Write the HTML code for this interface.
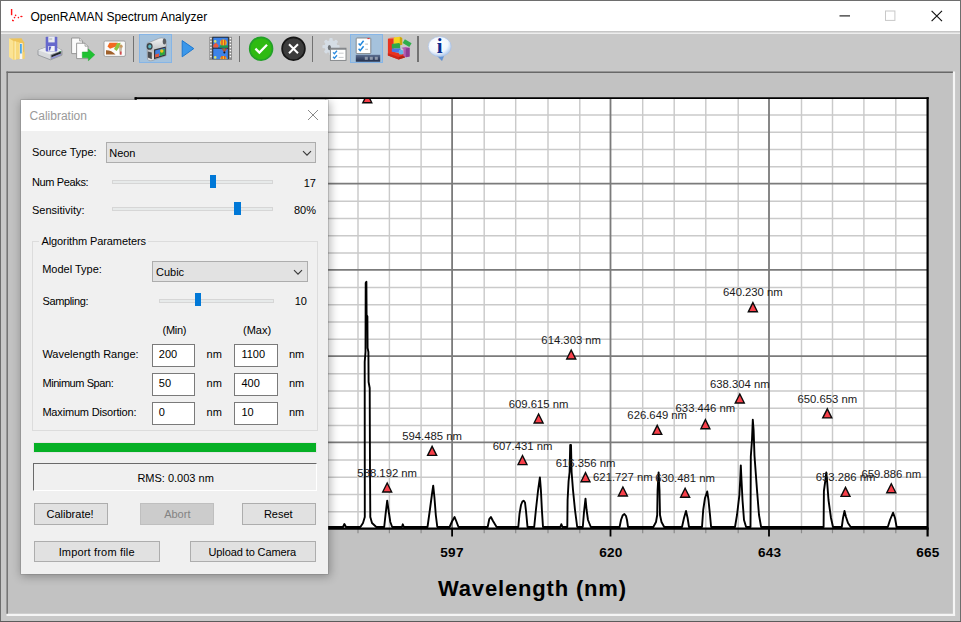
<!DOCTYPE html>
<html lang="en"><head><meta charset="utf-8"><title>OpenRAMAN Spectrum Analyzer</title>
<style>
html,body{margin:0;padding:0}
body{width:961px;height:622px;overflow:hidden;position:relative;background:#c8c8c8;font-family:"Liberation Sans",sans-serif;font-size:11px;color:#000}
.ab{position:absolute}
#win{left:0;top:0;width:959px;height:620px;border:1px solid #6e6e6e;border-bottom-color:#4a4a4a}
#title{left:1px;top:1px;width:959px;height:29.8px;background:#fff}
#title .cap{left:29.4px;top:8.7px;font-size:12px;line-height:15px;white-space:nowrap;color:#000}
#tbline{left:1px;top:30.8px;width:959px;height:3.5px;background:linear-gradient(#c6c6c6 0,#c6c6c6 48%,#ededed 52%,#ededed 100%)}
.sep{top:35.6px;width:1.3px;height:26.2px;background:#727272}
.hot{background:#a5c2dc;border:1px solid #86b5e6;box-sizing:border-box}
#panel{left:6.6px;top:71.2px;width:948.5px;height:544.8px;box-sizing:border-box;background:#c0c0c0;border-top:1.6px solid #6c6c6c;border-left:1.5px solid #6c6c6c;border-right:2.1px solid #f6f6f6;border-bottom:2.1px solid #f6f6f6}
#dlg{left:21px;top:100px;width:307px;height:474.4px;background:#f0f0f0;box-shadow:0 0 0 .6px rgba(110,110,110,.45),1px 1.5px 9px 1px rgba(0,0,0,.3)}
#dlg .tb{left:0;top:0;width:307px;height:31px;background:#fff}
#dlg .tb span{left:8.6px;top:8.9px;font-size:12px;line-height:15px;color:#9a9a9a}
.lbl{white-space:nowrap;line-height:13px;height:13px}
.combo{box-sizing:border-box;background:#e2e2e2;border:1px solid #adadad;line-height:19px;padding:1.3px 0 0 2.2px;white-space:nowrap}
.edit{box-sizing:border-box;background:#fff;border:1px solid #7a7a7a;line-height:17.8px;padding-left:5.8px;white-space:nowrap}
.btn{box-sizing:border-box;background:#e1e1e1;border:1px solid #adadad;text-align:center;line-height:13px;padding-top:4px;white-space:nowrap}
.btn.dis{background:#cccccc;border-color:#bfbfbf;color:#838383}
.track{box-sizing:border-box;height:4px;background:#e7eaea;border:1px solid #d6d6d6}
.thumb{width:6.4px;height:13.4px;background:#0078d7}
.grp{box-sizing:border-box;border:1px solid #dcdcdc}
</style></head><body>
<div id="win" class="ab"></div>
<div id="title" class="ab">
<svg class="ab" style="left:8px;top:6px" width="18" height="18" viewBox="9 7 18 18"><g fill="#ff1418"><rect x="10.9" y="9" width="1.4" height="6.2"/><circle cx="15.6" cy="15.4" r=".8"/><circle cx="14.5" cy="17.6" r=".8"/><path d="M12 19.4L14.2 20.2L13.4 21.4L12 21Z"/><circle cx="18.4" cy="17.6" r=".8"/><ellipse cx="21.4" cy="16.5" rx="1.2" ry=".7"/></g></svg>
<span class="ab cap">OpenRAMAN Spectrum Analyzer</span>
<svg class="ab" style="left:830px;top:5px" width="120" height="22" viewBox="831 6 120 22"><path d="M839.5 15.9H850" stroke="#111" stroke-width="1.1" fill="none"/><rect x="885.5" y="11" width="9.4" height="9.4" fill="none" stroke="#c8c8c8" stroke-width="1"/><path d="M931.6 10.8L942 21.2M942 10.8L931.6 21.2" stroke="#111" stroke-width="1.15" fill="none"/></svg>
</div>
<div id="tbline" class="ab"></div>

<!-- folder -->
<svg class="ab" style="left:8px;top:37px" width="18" height="24" viewBox="8 37 18 24">
<path d="M9.3 38.4L21.5 38.2L24.3 42.5V58.8L13.2 59.6Z" fill="#eec45a"/>
<path d="M19.4 43.2H22.6V59H19.4Z" fill="#f4f6f8"/><path d="M20 44H21.8V53.5H20Z" fill="#49a6e6"/>
<path d="M22.6 52H24.7V58.6L22.6 59Z" fill="#f5d370"/>
<path d="M9 38.3L13.4 41V60L9 57Z" fill="#fbe393"/>
<path d="M13.4 41L19.4 42.3V58.6L13.4 60Z" fill="#f7d97c"/>
<path d="M14.6 41.3L16 41.6V59.4L14.6 59.7Z" fill="#fbe9a8"/>
</svg>
<!-- save -->
<svg class="ab" style="left:36px;top:35px" width="28" height="26" viewBox="36 35 28 26">
<path d="M38 50.2L47 47H56L62 50.4V55.2L50.5 59.8L38 55Z" fill="#d7d9dc" stroke="#8d9094" stroke-width=".8"/>
<path d="M38 50.2L50.5 54.6L62 50.4L56 47H47Z" fill="#eceef0"/>
<path d="M50.5 54.6V59.8L62 55.2V50.4Z" fill="#9c9fa6"/>
<path d="M51.5 55.3L60.8 51.6V53.4L51.5 57.2Z" fill="#22252c"/>
<path d="M51.5 57.6L60.8 54V55L51.5 58.8Z" fill="#8f8fe0"/>
<rect x="45.7" y="36.8" width="11.6" height="14.6" rx=".8" fill="#6668cc"/>
<rect x="48.3" y="36.6" width="6.4" height="5.8" fill="#e9ebef"/>
<rect x="49.2" y="38.6" width="3" height=".8" fill="#9aa0aa"/>
<path d="M48.3 46H54.7V51.4H48.3Z" fill="#f3f4f8"/><path d="M49 46.6H51.4L50 50.6H49Z" fill="#5a5fc4"/>
<circle cx="60" cy="51.6" r=".7" fill="#2db34a"/>
</svg>
<!-- copy -->
<svg class="ab" style="left:70px;top:36px" width="27" height="26" viewBox="70 36 27 26">
<path d="M71.6 38H79.6L82.6 41V53.6H71.6Z" fill="#fafafa" stroke="#8f8f8f" stroke-width=".9"/>
<path d="M79.6 38V41H82.6" fill="#e4e4e4" stroke="#8f8f8f" stroke-width=".7"/>
<path d="M76.6 43.2H85L88 46.2V58.6H76.6Z" fill="#fdfdfd" stroke="#8f8f8f" stroke-width=".9"/>
<path d="M85 43.2V46.2H88" fill="#e4e4e4" stroke="#8f8f8f" stroke-width=".7"/>
<path d="M82.3 52H88.4V49L94.8 54.8L88.4 60.7V57.7H82.3Z" fill="#1fc232" stroke="#18a82a" stroke-width=".5"/>
</svg>
<!-- picture -->
<svg class="ab" style="left:102px;top:39px" width="26" height="20" viewBox="102 39 26 20">
<rect x="104" y="41" width="21.4" height="15.4" rx="1.4" fill="#fbfbfb" stroke="#9a9a9a" stroke-width=".9"/>
<path d="M109.5 42.8H118L116 46.5L110 48.8L107.5 46.5Z" fill="#f26a1f"/>
<path d="M117 43.2L120.6 42.8L119.8 46.5L116.6 51L114 49Z" fill="#8dc63f"/>
<path d="M106 50.2C109 50 113 51.5 115.5 54.6H106Z" fill="#a0612b"/>
<path d="M119 45.6L122.4 46.4L121 54.6H119.4Z" fill="#c8b8a2"/>
<rect x="120.3" y="51.5" width="1.2" height="3.2" fill="#d0202a"/>
<circle cx="121" cy="46.2" r="1.6" fill="#c79a62"/>
</svg>
<div class="ab sep" style="left:133px"></div>
<!-- camera (selected) -->
<div class="ab hot" style="left:139px;top:34px;width:33px;height:29px"></div>
<svg class="ab" style="left:144px;top:36px" width="25" height="27" viewBox="144 36 25 27">
<defs><linearGradient id="cg" x1="0" y1="0" x2="0" y2="1"><stop offset="0" stop-color="#f4f4f4"/><stop offset=".55" stop-color="#bfc1c4"/><stop offset="1" stop-color="#e6e6e6"/></linearGradient></defs>
<path d="M147 43.4L158.5 38.6C162 37 166.2 38.6 166.2 42V55.6L152 60.6C149 61.3 147.4 60 147.4 58Z" fill="url(#cg)" stroke="#8a8c90" stroke-width=".6"/>
<ellipse cx="164.4" cy="41.4" rx="1.7" ry="3" fill="#5b5d61"/>
<ellipse cx="149.6" cy="46.4" rx="3" ry="3.4" fill="#3c4348"/><ellipse cx="149.8" cy="46.4" rx="1.6" ry="1.9" fill="#5bb7c2"/>
<path d="M147.8 51.4L151.8 52.4V59.2L147.8 57.6Z" fill="#4b4d50"/>
<path d="M154 49.6L165.8 46.4V55.6L154 59.2Z" fill="#33363b"/>
<path d="M155.2 50.6L164.8 48V54.6L155.2 57.6Z" fill="#3f7fe0"/>
<path d="M160 50.2L164.8 49V54.6L160 56Z" fill="#2fa63a"/><circle cx="161.8" cy="51" r="1.7" fill="#f2c31c"/>
<path d="M155.2 54.6L159 53.6V56.4L155.2 57.6Z" fill="#e2563c"/>
</svg>
<!-- play -->
<svg class="ab" style="left:180px;top:39px" width="16" height="20" viewBox="180 39 16 20">
<path d="M182.2 40.6L193.8 48.6L182.2 56.8Z" fill="#3b97ea" stroke="#1d78cf" stroke-width="1" stroke-linejoin="round"/>
</svg>
<!-- film -->
<svg class="ab" style="left:208px;top:36px" width="25" height="25" viewBox="208 36 25 25">
<rect x="209.3" y="36.8" width="22.7" height="23" fill="#8c8c8c"/>
<rect x="212.4" y="36.8" width="16.3" height="23" fill="#15171a"/>
<rect x="213.2" y="37.6" width="14.7" height="10" fill="#3d83e8"/>
<rect x="213.2" y="48.6" width="14.7" height="10.6" fill="#3d83e8"/>
<g fill="#fff"><circle cx="210.9" cy="38.6" r=".8"/><circle cx="210.9" cy="41.6" r=".8"/><circle cx="210.9" cy="44.6" r=".8"/><circle cx="210.9" cy="47.6" r=".8"/><circle cx="210.9" cy="50.6" r=".8"/><circle cx="210.9" cy="53.6" r=".8"/><circle cx="210.9" cy="56.6" r=".8"/>
<circle cx="230.4" cy="38.6" r=".8"/><circle cx="230.4" cy="41.6" r=".8"/><circle cx="230.4" cy="44.6" r=".8"/><circle cx="230.4" cy="47.6" r=".8"/><circle cx="230.4" cy="50.6" r=".8"/><circle cx="230.4" cy="53.6" r=".8"/><circle cx="230.4" cy="56.6" r=".8"/></g>
<circle cx="223.4" cy="42.8" r="3.3" fill="#f3c619"/><path d="M222 39.8V45.8M224.8 39.8V45.8" stroke="#d8342a" stroke-width="1.1"/>
<path d="M219.6 45.4H227.9V47.6H219.6Z" fill="#1f9e48"/>
<path d="M213.6 44.4L216 42.8L218.6 45.4L218 47.6H213.2Z" fill="#ec5a3a"/>
<circle cx="215.2" cy="41.4" r="1.3" fill="#d8e36a"/>
<path d="M221.4 48.6H227.4L224.4 52.4Z" fill="#c9442f"/><path d="M223 48.6H225L224.4 51Z" fill="#3cae4a"/><circle cx="224.4" cy="52.6" r="1" fill="#15171a"/>
<path d="M220.2 59.2A3.2 3.2 0 0 1 226.6 59.2Z" fill="#f3c619"/><path d="M222 56V59.2M224.8 56V59.2" stroke="#d8342a" stroke-width="1.1"/>
<circle cx="215.2" cy="57.4" r="1.3" fill="#d8e36a"/>
<rect x="209.3" y="59.2" width="22.7" height=".8" fill="#8c8c8c"/>
</svg>
<div class="ab sep" style="left:239px"></div>
<!-- ok -->
<svg class="ab" style="left:248px;top:35px" width="27" height="28" viewBox="248 35 27 28">
<circle cx="261.1" cy="48.7" r="11.4" fill="#2fba12" stroke="#23a028" stroke-width="1.7"/>
<path d="M255.4 48.6L259.4 52.6L267 44.8" fill="none" stroke="#fff" stroke-width="2.3"/>
</svg>
<!-- cancel -->
<svg class="ab" style="left:280px;top:35px" width="27" height="28" viewBox="280 35 27 28">
<circle cx="293.5" cy="48.7" r="11.4" fill="#3c3c3c" stroke="#161616" stroke-width="1.7"/>
<path d="M289 44.2L298 53.2M298 44.2L289 53.2" fill="none" stroke="#fff" stroke-width="2"/>
</svg>
<div class="ab sep" style="left:312px"></div>
<!-- gear + checklist -->
<svg class="ab" style="left:321px;top:36px" width="27" height="26" viewBox="321 36 27 26">
<g fill="#d5dde5"><circle cx="331" cy="46.6" r="6.4"/>
<g transform="translate(331 46.6)"><rect x="-1.7" y="-8.6" width="3.4" height="17.2" rx="1"/><rect x="-1.7" y="-8.6" width="3.4" height="17.2" rx="1" transform="rotate(45)"/><rect x="-1.7" y="-8.6" width="3.4" height="17.2" rx="1" transform="rotate(90)"/><rect x="-1.7" y="-8.6" width="3.4" height="17.2" rx="1" transform="rotate(135)"/></g></g>
<ellipse cx="329.4" cy="47.6" rx="1.6" ry="2.6" fill="#6d7278"/>
<rect x="330.4" y="48.2" width="15.6" height="12.2" fill="#fff" stroke="#7d8084" stroke-width=".9"/>
<rect x="330.4" y="48.2" width="15.6" height="1.5" fill="#7d8084"/>
<path d="M333 52.4L334.4 53.8L337 50.8M333 56.8L334.4 58.2L337 55.2" fill="none" stroke="#2b8be0" stroke-width="1.3"/>
<path d="M338.6 53.2H343.6M338.6 57.4H343.6" stroke="#c9cbce" stroke-width="1"/>
</svg>
<!-- checklist selected -->
<div class="ab hot" style="left:350px;top:34px;width:33px;height:29px"></div>
<svg class="ab" style="left:354px;top:36px" width="28" height="27" viewBox="354 36 28 27">
<defs><linearGradient id="bg2" x1="0" y1="0" x2="0" y2="1"><stop offset="0" stop-color="#5c6f92"/><stop offset="1" stop-color="#1f2b48"/></linearGradient></defs>
<rect x="356.2" y="38" width="14.6" height="15.6" rx=".8" fill="#fff" stroke="#7e8185" stroke-width=".9"/>
<rect x="367.4" y="38" width="2.2" height="1.1" fill="#e0383e"/>
<path d="M358.6 43.4L360.2 45.2L363.6 40.8M358.6 48.8L360.2 50.6L363.6 46.2" fill="none" stroke="#1f86dc" stroke-width="1.5"/>
<path d="M365.2 44.2H368M365.2 49.4H368" stroke="#c4c6c9" stroke-width="1.2"/>
<rect x="355.8" y="54.8" width="24.4" height="6.9" fill="url(#bg2)"/>
<g fill="#8f99ab"><rect x="364.8" y="56.8" width="3" height="3"/><rect x="369.8" y="56.8" width="3" height="3"/><rect x="374.8" y="56.8" width="3" height="3"/></g>
</svg>
<!-- blocks -->
<svg class="ab" style="left:386px;top:35px" width="27" height="27" viewBox="386 35 27 27">
<path d="M387.9 38.8L393.7 38.2V51.8L404.9 54.6V57.6L398.6 59.6L387.9 55.6Z" fill="#e9331f"/>
<path d="M387.9 38.8L390.2 37.7L395.4 37.5L393.7 38.6Z" fill="#f4664e"/>
<path d="M387.9 53.2L398.6 57V59.6L387.9 55.6Z" fill="#c9281a"/>
<path d="M398.6 57L404.9 54.9V57.6L398.6 59.6Z" fill="#b32014"/>
<path d="M393.8 37.6L399.8 36.7L402.2 37.9V44.8L396.4 45.6L393.8 44.4Z" fill="#f5d41c"/><path d="M399.8 36.7L402.2 37.9V44.8L399.8 45.2Z" fill="#c9a50f"/>
<path d="M391.8 44L399 43L400.2 44V48.4H391.8Z" fill="#2ea84c"/>
<path d="M391.8 48.4H400.6V53L391.8 51.8Z" fill="#4a78e8"/>
<rect x="398.8" y="50" width="4.2" height="4.6" rx="1.1" fill="#62b4e6"/>
<path d="M401.4 47.8L405.8 47L409.6 47.8V56.4L405.8 57.2L403.4 56V49.2Z" fill="#b25cb2"/><path d="M405.8 48.4L409.6 47.8V56.4L405.8 57.2Z" fill="#8b3c93"/>
<rect x="-3.9" y="-2.2" width="7.8" height="4.4" fill="#2fae4a" transform="translate(407.1 43.2) rotate(31)"/>
</svg>
<div class="ab sep" style="left:417.4px"></div>
<!-- info -->
<svg class="ab" style="left:426px;top:35px" width="28" height="28" viewBox="426 35 28 28">
<defs><radialGradient id="ig" cx=".42" cy=".36" r=".7"><stop offset="0" stop-color="#ffffff"/><stop offset=".62" stop-color="#f1f6fc"/><stop offset="1" stop-color="#9fbde6"/></radialGradient></defs>
<path d="M436.8 55.2L441.9 60.6L444 55Z" fill="#5f93d6" stroke="#4a7fc8" stroke-width=".5"/>
<ellipse cx="439.7" cy="46.6" rx="11.5" ry="10" fill="url(#ig)" stroke="#a9c2e6" stroke-width=".7"/>
<text x="439.6" y="53.4" font-family="'Liberation Serif',serif" font-weight="bold" font-size="21" fill="#0b2b90" text-anchor="middle">i</text>
</svg>

<svg id="chart" width="961" height="622" viewBox="0 0 961 622" style="position:absolute;left:0;top:0">
<defs><clipPath id="pc2"><rect x="300" y="98.9" width="200" height="20"/></clipPath><clipPath id="pc"><rect x="135.8" y="98.2" width="791.8" height="430.4"/></clipPath></defs>
<rect x="6.5" y="71.5" width="948.6" height="544.5" fill="#c2c2c2"/>
<path d="M6.5 72.3H953" stroke="#686868" stroke-width="1.55" fill="none"/>
<path d="M7.2 71.5V613.9" stroke="#6c6c6c" stroke-width="1.4" fill="none"/>
<path d="M954 71.6V616" stroke="#f5f5f5" stroke-width="2.2" fill="none"/>
<path d="M6.5 614.9H955.1" stroke="#f5f5f5" stroke-width="2.2" fill="none"/>
<rect x="135.8" y="98.2" width="791.8" height="430.4" fill="#fff"/>
<path d="M166.5 98.2V528.6M198.2 98.2V528.6M229.9 98.2V528.6M261.6 98.2V528.6M325.6 98.2V528.6M358 98.2V528.6M389.4 98.2V528.6M421.1 98.2V528.6M484.2 98.2V528.6M515.7 98.2V528.6M548 98.2V528.6M579.8 98.2V528.6M642.7 98.2V528.6M674.2 98.2V528.6M705.8 98.2V528.6M738.2 98.2V528.6M801.5 98.2V528.6M832.5 98.2V528.6M863.9 98.2V528.6M895.8 98.2V528.6M135.8 115H927.6M135.8 132.2H927.6M135.8 149.5H927.6M135.8 166.7H927.6M135.8 201.2H927.6M135.8 218.5H927.6M135.8 235.7H927.6M135.8 253H927.6M135.8 287.4H927.6M135.8 304.7H927.6M135.8 321.9H927.6M135.8 339.2H927.6M135.8 373.7H927.6M135.8 390.9H927.6M135.8 408.2H927.6M135.8 425.4H927.6M135.8 459.9H927.6M135.8 477.2H927.6M135.8 494.4H927.6M135.8 511.7H927.6" stroke="#cacaca" stroke-width="1.45" fill="none"/>
<path d="M293.6 98.2V528.6M452.1 98.2V528.6M610.5 98.2V528.6M769 98.2V528.6M135.8 183.7H927.6M135.8 269.9H927.6M135.8 356.1H927.6M135.8 442.4H927.6" stroke="#7b7b7b" stroke-width="1.8" fill="none"/>
<path d="M166.5 528.6V533.2M198.2 528.6V533.2M229.9 528.6V533.2M261.6 528.6V533.2M325.6 528.6V533.2M358 528.6V533.2M389.4 528.6V533.2M421.1 528.6V533.2M484.2 528.6V533.2M515.7 528.6V533.2M548 528.6V533.2M579.8 528.6V533.2M642.7 528.6V533.2M674.2 528.6V533.2M705.8 528.6V533.2M738.2 528.6V533.2M801.5 528.6V533.2M832.5 528.6V533.2M863.9 528.6V533.2M895.8 528.6V533.2" stroke="#8a8a8a" stroke-width="1.2" fill="none"/>
<path d="M293.6 528.6V536.4M452.1 528.6V536.4M610.5 528.6V536.4M769 528.6V536.4" stroke="#000" stroke-width="1.8" fill="none"/>
<polyline points="135,527 343,527 344.4,524 346,527 360.4,527 363,523 364.8,517 364.7,362 365.5,352 365.7,283 366.4,281.8 366.6,315 367.4,316.5 367.6,348 368.4,352 368.6,382 369.7,388 370,470 370.3,517 372,523 376.3,527 384.2,527 385.6,514 387.2,500.7 388.8,512 390.3,522 392.2,527 402,527 402.8,524.3 403.8,527 427.5,527 430,509 432,494 433.2,485.7 434.4,497 435.8,515 437.3,527 449.6,527 452,521.5 454.6,517 456.2,521 458.5,527 487.7,527 489.3,519 490.9,517 493,521 496.6,527 518.3,527 519.5,514 521,505 522.4,501.5 523.6,500.7 525,502.5 526,511 527.5,527 534.2,527 536,509 538,491 539.9,477.4 540.9,490 541.9,510 543,527 560.3,527 561.3,524.2 562.5,527 567.3,527 567.6,499.8 568.6,481 569.6,472 570.2,445 571,445 571.6,472 573,490 575,510 577.2,527 582.8,527 584,512 585.5,498.6 586.6,510 588,520 590.8,527 619.6,527 621,520 622.8,515.2 624.4,514 626,516 627,520 628,527 653.3,527 656,522 657.2,515 657.6,490 658.6,472.4 659.5,490 660,515 661.5,522 664.2,527 682,527 684,518 686,511 687.6,518 689,527 702,527 703.2,510 705,498 707.2,491.5 708.5,500 710,515 711.1,527 735,527 737,515 739.4,495 740.2,480 740.8,465.4 741.5,480 742.5,500 744,520 746.1,527 750.5,527 750.8,456.5 752,440 752.8,419.7 753.6,430 754.5,456 757,490 759,515 761.1,527 823.6,527 823.9,491 825.4,480 826.3,472.4 827,480 828.5,500 831,518 833,527 841.8,527 843,518 844.5,511 846,517 848,523 850.7,527 887.8,527 890,520 893.1,512.7 895,518 896.6,527 927,527" fill="none" stroke="#000" stroke-width="1.9" stroke-linejoin="round" clip-path="url(#pc)"/>
<path d="M134.7 98.1H928.7" stroke="#000" stroke-width="1.8" fill="none"/>
<path d="M134.7 528.65H928.7" stroke="#000" stroke-width="2.3" fill="none"/>
<path d="M135.7 97.2V529.8M927.6 97.2V536.4" stroke="#000" stroke-width="2.2" fill="none"/>
<path d="M387.2 481.4L392.8 492.7H381.6ZM432.1 444.8L437.8 456.1H426.5ZM522.5 454L528.1 465.3H516.9ZM538.6 412.4L544.2 423.7H533ZM571.2 348.4L576.9 359.7H565.6ZM585.5 471.1L591.1 482.4H579.9ZM622.9 485.4L628.5 496.7H617.2ZM657.2 423.8L662.9 435.1H651.6ZM685.1 486.7L690.8 498H679.5ZM705.4 418.1L711 429.4H699.8ZM739.8 392.4L745.4 403.7H734.1ZM752.9 301.1L758.5 312.4H747.2ZM827.3 407.3L832.9 418.6H821.6ZM845.5 485.8L851.1 497.1H839.9ZM891.3 482.2L896.9 493.5H885.6Z" fill="#0a0a0a"/>
<path d="M387.2 484.5L390.6 491.3H383.8ZM432.1 447.9L435.5 454.7H428.7ZM522.5 457.1L525.9 463.9H519.1ZM538.6 415.5L542 422.3H535.2ZM571.2 351.5L574.6 358.3H567.8ZM585.5 474.2L588.9 481H582.1ZM622.9 488.5L626.3 495.3H619.5ZM657.2 426.9L660.6 433.7H653.8ZM685.1 489.8L688.5 496.6H681.7ZM705.4 421.2L708.8 428H702ZM739.8 395.5L743.2 402.3H736.4ZM752.9 304.2L756.3 311H749.5ZM827.3 410.4L830.7 417.2H823.9ZM845.5 488.9L848.9 495.7H842.1ZM891.3 485.3L894.7 492.1H887.9Z" fill="#f8404a"/>
<g clip-path="url(#pc2)"><path d="M367.3 92.2L372.9 103.5H361.7Z" fill="#0a0a0a"/><path d="M367.3 95.3L370.7 102.1H363.9Z" fill="#f8404a"/></g>
<g font-family="'Liberation Sans',sans-serif" font-size="11.3" fill="#1a1a1a" text-anchor="middle">
<text x="387.2" y="477">588.192 nm</text>
<text x="432.1" y="440">594.485 nm</text>
<text x="522.5" y="450">607.431 nm</text>
<text x="538.6" y="408">609.615 nm</text>
<text x="571.2" y="344">614.303 nm</text>
<text x="585.5" y="467">616.356 nm</text>
<text x="622.9" y="481">621.727 nm</text>
<text x="657.2" y="419">626.649 nm</text>
<text x="685.1" y="482">630.481 nm</text>
<text x="705.4" y="412">633.446 nm</text>
<text x="739.8" y="388">638.304 nm</text>
<text x="752.9" y="296">640.230 nm</text>
<text x="827.3" y="403">650.653 nm</text>
<text x="845.5" y="481">653.286 nm</text>
<text x="891.3" y="478">659.886 nm</text>
</g>
<g font-family="'Liberation Sans',sans-serif" font-size="13.6" font-weight="bold" letter-spacing=".2" fill="#000" text-anchor="middle">
<text x="452" y="557">597</text><text x="610.9" y="557">620</text><text x="769.6" y="557">643</text><text x="927.8" y="557">665</text>
</g>
<text x="532" y="595.5" font-family="'Liberation Sans',sans-serif" font-size="22" font-weight="bold" fill="#000" text-anchor="middle" textLength="188" lengthAdjust="spacing">Wavelength (nm)</text>
</svg>
<div id="dlg" class="ab">
 <div class="ab tb"><span class="ab">Calibration</span>
 <svg class="ab" style="left:285px;top:8px" width="14" height="14" viewBox="0 0 14 14"><path d="M2 2L12 12M12 2L2 12" stroke="#8a8a8a" stroke-width="1" fill="none"/></svg></div>

 <span class="ab lbl" style="left:11px;top:46px">Source Type:</span>
 <div class="ab combo" style="left:85px;top:42px;width:210px;height:21px"></div><span class="ab lbl" style="left:88.2px;top:47px">Neon</span>
 <svg class="ab" style="left:279.6px;top:48.6px" width="12" height="9" viewBox="0 0 12 9"><path d="M2 2.2L6 6.2L10 2.2" fill="none" stroke="#3a3a3a" stroke-width="1.15"/></svg>

 <span class="ab lbl" style="left:11px;top:76px;letter-spacing:-.36px">Num Peaks:</span>
 <div class="ab track" style="left:91px;top:79.5px;width:161px"></div>
 <div class="ab thumb" style="left:189.1px;top:74.8px"></div>
 <span class="ab lbl" style="right:12px;top:77px">17</span>

 <span class="ab lbl" style="left:11px;top:104px">Sensitivity:</span>
 <div class="ab track" style="left:91px;top:107px;width:161px"></div>
 <div class="ab thumb" style="left:213.4px;top:101.8px"></div>
 <span class="ab lbl" style="right:12px;top:104px">80%</span>

 <div class="ab grp" style="left:11.2px;top:141px;width:285.8px;height:190px"></div>
 <span class="ab lbl" style="left:18px;top:135px;background:#f0f0f0;padding:0 2px 0 2.5px;letter-spacing:-.1px">Algorithm Parameters</span>

 <span class="ab lbl" style="left:21.2px;top:163px">Model Type:</span>
 <div class="ab combo" style="left:131px;top:161px;width:156px;height:21px"></div><span class="ab lbl" style="left:135px;top:166px">Cubic</span>
 <svg class="ab" style="left:271.3px;top:167.5px" width="12" height="9" viewBox="0 0 12 9"><path d="M2 2.2L6 6.2L10 2.2" fill="none" stroke="#3a3a3a" stroke-width="1.15"/></svg>

 <span class="ab lbl" style="left:21.4px;top:195px;letter-spacing:-.34px">Sampling:</span>
 <div class="ab track" style="left:137.5px;top:198.5px;width:115.5px"></div>
 <div class="ab thumb" style="left:173.9px;top:192.8px"></div>
 <span class="ab lbl" style="right:21px;top:195px">10</span>

 <span class="ab lbl" style="left:141.6px;top:224px;letter-spacing:-.3px">(Min)</span>
 <span class="ab lbl" style="left:222px;top:224px">(Max)</span>

 <span class="ab lbl" style="left:21.4px;top:248px">Wavelength Range:</span>
 <div class="ab edit" style="left:130.8px;top:244.1px;width:43.2px;height:22.9px"></div><span class="ab lbl" style="left:137.8px;top:248px">200</span>
 <span class="ab lbl" style="left:185.6px;top:248px">nm</span>
 <div class="ab edit" style="left:213.4px;top:244.1px;width:43.2px;height:22.9px"></div><span class="ab lbl" style="left:220.4px;top:248px">1100</span>
 <span class="ab lbl" style="left:268px;top:248px">nm</span>

 <span class="ab lbl" style="left:21.4px;top:277px;letter-spacing:-.42px">Minimum Span:</span>
 <div class="ab edit" style="left:130.8px;top:273.2px;width:43.2px;height:22.9px"></div><span class="ab lbl" style="left:137.8px;top:277px">50</span>
 <span class="ab lbl" style="left:185.6px;top:277px">nm</span>
 <div class="ab edit" style="left:213.4px;top:273.2px;width:43.2px;height:22.9px"></div><span class="ab lbl" style="left:220.4px;top:277px">400</span>
 <span class="ab lbl" style="left:268px;top:277px">nm</span>

 <span class="ab lbl" style="left:21.4px;top:306px;letter-spacing:-.18px">Maximum Disortion:</span>
 <div class="ab edit" style="left:130.8px;top:301.8px;width:43.2px;height:22.9px"></div><span class="ab lbl" style="left:137.8px;top:306px">0</span>
 <span class="ab lbl" style="left:185.6px;top:306px">nm</span>
 <div class="ab edit" style="left:213.4px;top:301.8px;width:43.2px;height:22.9px"></div><span class="ab lbl" style="left:220.4px;top:306px">10</span>
 <span class="ab lbl" style="left:268px;top:306px">nm</span>

 <div class="ab" style="left:12px;top:342px;width:284px;height:10.6px;background:#e6e6e6;border:0"></div>
 <div class="ab" style="left:12.6px;top:342.8px;width:282.8px;height:9px;background:#06b025"></div>

 <div class="ab" style="left:12px;top:363px;width:284px;height:27.6px;box-sizing:border-box;border-top:1.7px solid #6a6a6a;border-left:1.7px solid #6a6a6a;border-right:1px solid #fff;border-bottom:1px solid #fff;"></div><span class="ab lbl" style="left:116.4px;top:372px">RMS: 0.003 nm</span>

 <div class="ab btn" style="left:12.6px;top:402.7px;width:74.4px;height:22px;padding-top:4.5px;text-indent:-1.4px">Calibrate!</div>
 <div class="ab btn dis" style="left:119.3px;top:402.7px;width:74px;height:22px;padding-top:4.5px">Abort</div>
 <div class="ab btn" style="left:221px;top:402.7px;width:74px;height:22px;padding-top:4.5px;text-indent:-1.4px">Reset</div>
 <div class="ab btn" style="left:12.6px;top:440.6px;width:126.2px;height:21.7px;padding-top:4.4px;letter-spacing:.17px">Import from file</div>
 <div class="ab btn" style="left:169px;top:440.6px;width:126px;height:21.7px;padding-top:4.4px;letter-spacing:-.1px;text-indent:-1.4px">Upload to Camera</div>
</div>
<div class="ab" style="left:0;top:620.6px;width:961px;height:1.4px;background:#5c5c5c"></div>
</body></html>
